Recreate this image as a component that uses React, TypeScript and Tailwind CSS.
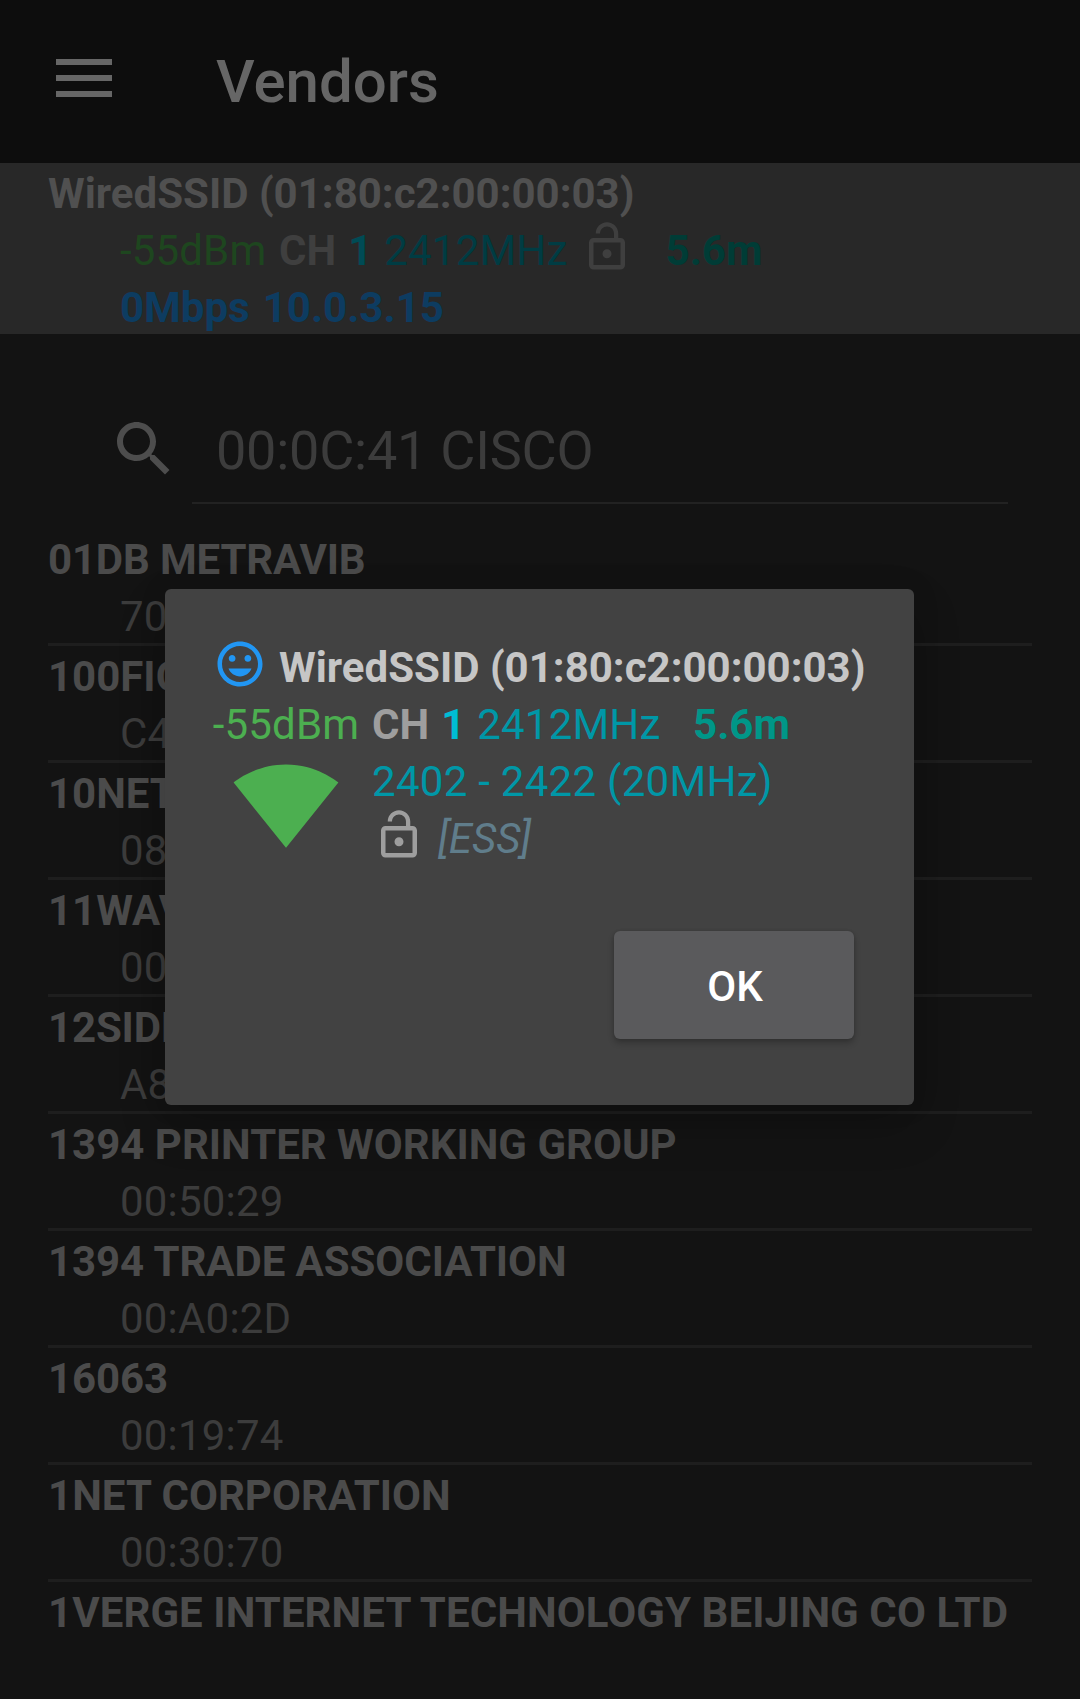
type IconProps = { className?: string };

function LockOpenIcon({ className = "" }: IconProps) {
  return (
    <svg viewBox="0 0 24 24" fill="currentColor" className={`block size-[54px] shrink-0 ${className}`}>
      <path d="M12 17c1.1 0 2-.9 2-2s-.9-2-2-2-2 .9-2 2 .9 2 2 2zm6-9h-1V6c0-2.76-2.24-5-5-5S7 3.24 7 6h1.9c0-1.71 1.39-3.1 3.1-3.1s3.1 1.39 3.1 3.1v2H6c-1.1 0-2 .9-2 2v10c0 1.1.9 2 2 2h12c1.1 0 2-.9 2-2V10c0-1.1-.9-2-2-2zm0 12H6V10h12v10z" />
    </svg>
  );
}

function SmileIcon({ className = "" }: IconProps) {
  return (
    <svg viewBox="0 0 24 24" fill="currentColor" className={`block size-[54px] shrink-0 ${className}`}>
      <path d="M11.99 2C6.47 2 2 6.48 2 12s4.47 10 9.99 10C17.52 22 22 17.52 22 12S17.52 2 11.99 2zM12 20c-4.42 0-8-3.58-8-8s3.58-8 8-8 8 3.58 8 8-3.58 8-8 8zm3.5-9c.83 0 1.5-.67 1.5-1.5S16.33 8 15.5 8 14 8.67 14 9.5s.67 1.5 1.5 1.5zm-7 0c.83 0 1.5-.67 1.5-1.5S9.33 8 8.5 8 7 8.67 7 9.5 7.67 11 8.5 11zm3.5 6.5c2.33 0 4.31-1.46 5.11-3.5H6.89c.8 2.04 2.78 3.5 5.11 3.5z" />
    </svg>
  );
}

function SearchIcon({ className = "" }: IconProps) {
  return (
    <svg viewBox="0 0 24 24" fill="currentColor" className={`block size-[72px] shrink-0 ${className}`}>
      <path d="M15.5 14h-.79l-.28-.27C15.41 12.59 16 11.11 16 9.5 16 5.91 13.09 3 9.5 3S3 5.91 3 9.5 5.91 16 9.5 16c1.61 0 3.09-.59 4.23-1.57l.27.28v.79l5 4.99L20.49 19l-4.99-5zm-6 0C7.01 14 5 11.99 5 9.5S7.01 5 9.5 5 14 7.01 14 9.5 11.99 14 9.5 14z" />
    </svg>
  );
}

function SignalIcon({ className = "" }: IconProps) {
  return (
    <svg viewBox="0 0 24 24" fill="currentColor" className={`block size-[108px] shrink-0 ${className}`}>
      <path d="M12.01 21.49L23.64 7c-.45-.34-4.93-4-11.64-4C5.28 3 .81 6.66.36 7l11.63 14.49.01.01.01-.01z" />
    </svg>
  );
}

const vendors = [
  { name: "01DB METRAVIB", mac: "70", tracking: "tracking-[-0.16px]" },
  { name: "100FIO", mac: "C4", tracking: "" },
  { name: "10NET", mac: "08", tracking: "" },
  { name: "11WAV", mac: "00", tracking: "" },
  { name: "12SIDE", mac: "A8", tracking: "tracking-[-0.15px]" },
  { name: "1394 PRINTER WORKING GROUP", mac: "00:50:29", tracking: "" },
  { name: "1394 TRADE ASSOCIATION", mac: "00:A0:2D", tracking: "tracking-[-0.06px]" },
  { name: "16063", mac: "00:19:74", tracking: "tracking-[-0.1px]" },
  { name: "1NET CORPORATION", mac: "00:30:70", tracking: "tracking-[0.05px]" },
  { name: "1VERGE INTERNET TECHNOLOGY BEIJING CO LTD", mac: "", tracking: "tracking-[0.08px]" },
];

const line = "flex h-[57px] leading-[61px] whitespace-pre";

function Dialog() {
  return (
    <div className="absolute inset-0 pt-[589px] pl-[165px]">
      <div
        role="dialog"
        className="flex h-[516px] w-[749px] flex-col rounded-[6px] bg-[#424242] p-12 shadow-[0_20px_48px_rgba(0,0,0,0.2),0_0_30px_rgba(0,0,0,0.08)]"
      >
        <div className={line}>
          <SmileIcon className="text-[#2196f3]" />
          <span className="ml-3 font-bold text-[#c6c6c6]">WiredSSID (01:80:c2:00:00:03)</span>
        </div>
        <div className="flex">
          <div className="flex w-[146px] flex-col items-center">
            <div className={line}>
              <span className="tracking-[0.15px] text-[#4caf50]">-55dBm</span>
            </div>
            <SignalIcon className="text-[#4caf50]" />
          </div>
          <div className="ml-[13px]">
            <div className={line}>
              <span className="font-bold text-[#9e9e9e]">CH</span>
              <span className="ml-3 font-bold text-[#00bcd4]">1</span>
              <span className="ml-3 tracking-[0.2px] text-[#0097a7]">2412MHz</span>
              <span className="ml-[32.5px] font-bold text-[#009688]">5.6m</span>
            </div>
            <div className={line}>
              <span className="tracking-[0.28px] text-[#0097a7]">2402 - 2422 (20MHz)</span>
            </div>
            <div className={line}>
              <LockOpenIcon className="text-[#9e9e9e]" />
              <span className="ml-3 text-[#607d8b] italic">[ESS]</span>
            </div>
          </div>
        </div>
        <button className="mt-[66px] mr-3 h-[108px] w-[240px] self-end rounded-[6px] bg-[#5a5a5c] pt-[2px] pl-[2px] font-medium text-white shadow-[0_4px_6px_rgba(0,0,0,0.24),0_0_3px_rgba(0,0,0,0.12)]">
          OK
        </button>
      </div>
    </div>
  );
}

export default function App() {
  return (
    <div className="relative h-[1699px] w-[1080px] overflow-hidden bg-[#131313] font-['Roboto',sans-serif] text-[42px]">
      <header className="flex h-[163px] items-center bg-[#0d0d0d]">
        <div className="ml-14 flex w-14 flex-col gap-[10px] pb-[7px]">
          <div className="h-[6px] bg-[#666666]" />
          <div className="h-[6px] bg-[#666666]" />
          <div className="h-[6px] bg-[#666666]" />
        </div>
        <h1 className="ml-[104px] text-[60px] leading-[70px] font-medium text-[#666666]">Vendors</h1>
      </header>

      <section className="h-[171px] bg-[#282828] pl-12">
        <div className={line}>
          <span className="font-bold text-[#505050]">WiredSSID (01:80:c2:00:00:03)</span>
        </div>
        <div className={`${line} pl-[72px]`}>
          <span className="w-[147px] tracking-[0.15px] text-[#1e461f]">-55dBm</span>
          <span className="ml-3 font-bold text-[#3f3f3f]">CH</span>
          <span className="ml-3 font-bold text-[#004b55]">1</span>
          <span className="ml-3 tracking-[0.2px] text-[#003c43]">2412MHz</span>
          <LockOpenIcon className="ml-3 text-[#3f3f3f]" />
          <span className="ml-8 font-bold text-[#003c36]">5.6m</span>
        </div>
        <div className={`${line} pl-[72px] font-bold text-[#0d3c61]`}>
          <span>0Mbps</span>
          <span className="ml-[13px]">10.0.3.15</span>
        </div>
      </section>

      <div className="flex h-[195px] pt-[79px] pl-[108px]">
        <SearchIcon className="text-[#4d4d4d]" />
        <div className="ml-3 h-[91px] w-[816px] border-b-2 border-[#222222] pl-6 text-[54px] leading-[76px] tracking-[-0.23px] text-[#3c3c3c]">
          00:0C:41 CISCO
        </div>
      </div>

      <ul className="mr-12 ml-12">
        {vendors.map((v) => (
          <li key={v.name} className="h-[117px] border-b-[3px] border-[#1e1e1e] last:border-0">
            <div className={`${line} font-bold text-[#4b4b4b] ${v.tracking}`}>{v.name}</div>
            <div className={`${line} pl-[72px] tracking-[0.2px] text-[#3c3c3c]`}>{v.mac}</div>
          </li>
        ))}
      </ul>

      <Dialog />
    </div>
  );
}
